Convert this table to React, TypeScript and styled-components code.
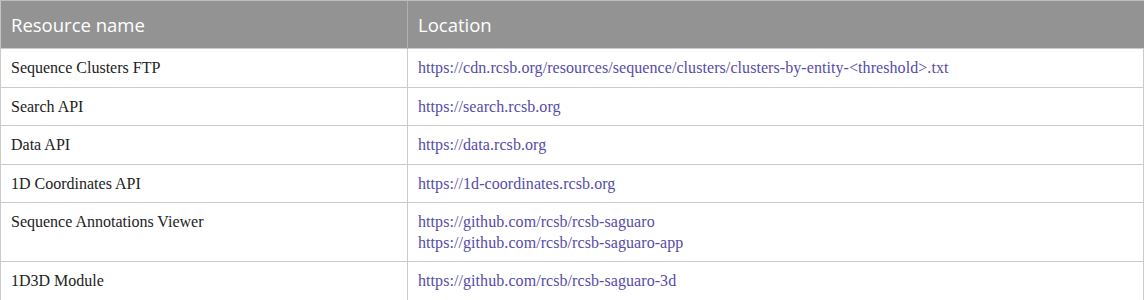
import styled, { createGlobalStyle } from "styled-components";

const GlobalStyle = createGlobalStyle`
  html, body {
    margin: 0;
    padding: 0;
    background: #fff;
  }
`;

const Table = styled.table`
  width: 1144px;
  border-collapse: collapse;
  table-layout: fixed;
`;

const HeadCell = styled.th`
  height: 47px;
  padding: 0 10px;
  background: #939393;
  color: #fff;
  font-family: "Open Sans", "Liberation Sans", sans-serif;
  font-size: 18.5px;
  font-weight: 400;
  text-align: left;
  border-left: 1px solid #b0b0b0;
  border-top: 1px solid #bdbdbd;
  &:first-child {
    border-left: 1px solid #c4c4c4;
  }
`;

const Cell = styled.td<{ $link?: boolean }>`
  padding: 9px 10px 8px 10px;
  border: 1px solid #cbcbcb;
  font-family: "Liberation Serif", "DejaVu Serif", serif;
  font-size: 16px;
  line-height: 20.5px;
  letter-spacing: ${(p) => (p.$link ? "0.07px" : "0")};
  color: ${(p) => (p.$link ? "#554ca8" : "#222")};
  vertical-align: top;
`;

const Link = styled.a`
  display: block;
  color: inherit;
  text-decoration: none;
`;

type Resource = {
  name: string;
  urls: string[];
};

const resources: Resource[] = [
  {
    name: "Sequence Clusters FTP",
    urls: ["https://cdn.rcsb.org/resources/sequence/clusters/clusters-by-entity-<threshold>.txt"],
  },
  { name: "Search API", urls: ["https://search.rcsb.org"] },
  { name: "Data API", urls: ["https://data.rcsb.org"] },
  { name: "1D Coordinates API", urls: ["https://1d-coordinates.rcsb.org"] },
  {
    name: "Sequence Annotations Viewer",
    urls: ["https://github.com/rcsb/rcsb-saguaro", "https://github.com/rcsb/rcsb-saguaro-app"],
  },
  { name: "1D3D Module", urls: ["https://github.com/rcsb/rcsb-saguaro-3d"] },
];

function App() {
  return (
    <>
      <GlobalStyle />
      <Table>
        <colgroup>
          <col style={{ width: 407 }} />
          <col />
        </colgroup>
        <thead>
          <tr>
            <HeadCell>Resource name</HeadCell>
            <HeadCell>Location</HeadCell>
          </tr>
        </thead>
        <tbody>
          {resources.map((r) => (
            <tr key={r.name}>
              <Cell>{r.name}</Cell>
              <Cell $link>
                {r.urls.map((u) => (
                  <Link key={u} href={u}>
                    {u}
                  </Link>
                ))}
              </Cell>
            </tr>
          ))}
        </tbody>
      </Table>
    </>
  );
}

export default App;
